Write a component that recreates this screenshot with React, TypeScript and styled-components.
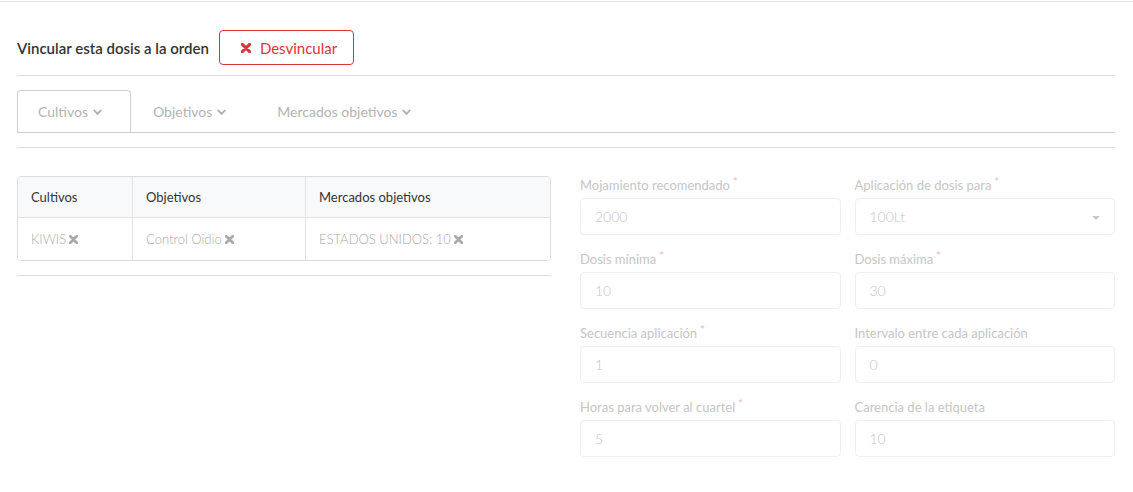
import React from 'react'
import styled, { createGlobalStyle } from 'styled-components'

const GlobalStyle = createGlobalStyle`
    html, body {
        margin: 0;
        padding: 0;
        background: #fff;
        font-family: Lato, "Open Sans", "Liberation Sans", sans-serif;
        color: #333;
    }
    * {
        box-sizing: border-box;
    }
`

const TopRule = styled.div`
    margin-top: 1px;
    height: 1px;
    background: #e3e3e3;
`

const Content = styled.div`
    padding: 28px 18px 0 17px;
`

const HeaderRow = styled.div`
    display: flex;
    align-items: center;
    gap: 10px;
    height: 35px;
`

const Title = styled.span`
    font-size: 15px;
    font-weight: 600;
    color: #333;
`

const DangerButton = styled.button`
    display: flex;
    align-items: center;
    gap: 9px;
    height: 35px;
    width: 135px;
    padding: 0 0 0 21px;
    background: #fff;
    border: 1px solid #d9343a;
    border-radius: 4px;
    color: #d9343a;
    font-family: inherit;
    font-size: 15px;
`

const Rule = styled.hr<{ $top: number; $color?: string }>`
    margin: ${(p) => p.$top}px 0 0;
    border: 0;
    height: 1px;
    background: ${(p) => p.$color || '#dedede'};
`

const TabList = styled.div`
    margin-top: 14px;
    display: flex;
    height: 43px;
    border-bottom: 1px solid #cfcfcf;
`

const TabItem = styled.div<{ $active?: boolean }>`
    display: flex;
    align-items: center;
    gap: 5px;
    padding: 0 28px 0 ${(p) => (p.$active ? 20 : 21)}px;
    height: 42px;
    font-size: 14px;
    color: #b3b3b3;
    border: 1px solid ${(p) => (p.$active ? '#cfcfcf' : 'transparent')};
    border-bottom: 0;
    border-radius: 4px 4px 0 0;
`

const Columns = styled.div`
    margin-top: 28px;
    display: grid;
    grid-template-columns: 534px 535px;
    column-gap: 29px;
`

const LeftCol = styled.div``

const Table = styled.div`
    border: 1px solid #dcdcdc;
    border-radius: 4px;
    overflow: hidden;
    display: grid;
    grid-template-columns: 115px 173px 1fr;
`

const Cell = styled.div<{ $head?: boolean; $last?: boolean }>`
    display: flex;
    align-items: center;
    gap: 3px;
    height: ${(p) => (p.$head ? 41 : 42)}px;
    padding-left: 13px;
    font-size: 13px;
    font-weight: ${(p) => (p.$head ? 400 : 300)};
    color: ${(p) => (p.$head ? '#333' : '#a9a9a9')};
    background: ${(p) => (p.$head ? '#f8f9fb' : '#fff')};
    border-right: ${(p) => (p.$last ? '0' : '1px solid #e2e2e2')};
    border-bottom: ${(p) => (p.$head ? '1px solid #e2e2e2' : '0')};
`

const Form = styled.div`
    display: grid;
    grid-template-columns: 1fr 1fr;
    column-gap: 14px;
    row-gap: 17px;
    padding-top: 2px;
`

const Field = styled.div`
    display: flex;
    flex-direction: column;
`

const Label = styled.label`
    font-size: 13px;
    line-height: 15px;
    height: 20px;
    color: #c6c6c6;
`

const Required = styled.sup`
    color: #f4b6b6;
    margin-left: 3px;
    font-size: 11px;
    vertical-align: 4px;
    line-height: 0;
`

const InputBox = styled.div`
    position: relative;
    display: flex;
    align-items: center;
    height: 37px;
    padding: 0 14px;
    border: 1px solid #efefef;
    border-radius: 4px;
    font-size: 14px;
    font-weight: 300;
    color: #c4c4c4;
`

const Caret = styled.span`
    position: absolute;
    right: 14px;
    top: 17px;
    width: 0;
    height: 0;
    border-left: 4px solid transparent;
    border-right: 4px solid transparent;
    border-top: 4px solid #c9c9c9;
`

// chunky "times" glyph, like the icon font one
function TimesIcon({ size = 10, color = 'currentColor' }: { size?: number; color?: string }) {
    return (
        <svg width={size} height={size} viewBox="0 0 10 10" style={{ display: 'block' }}>
            <path d="M1.4 1.4 L8.6 8.6 M8.6 1.4 L1.4 8.6" stroke={color} strokeWidth="3" strokeLinecap="round" />
        </svg>
    )
}

function ChevronDown() {
    return (
        <svg width="9" height="7" viewBox="0 0 9 7" style={{ display: 'block', marginTop: 1 }}>
            <path d="M1.3 1.6 L4.5 4.8 L7.7 1.6" fill="none" stroke="#b3b3b3" strokeWidth="2" strokeLinecap="round" />
        </svg>
    )
}

const fields = [
    { label: 'Mojamiento recomendado', value: '2000', required: true },
    { label: 'Aplicación de dosis para', value: '100Lt', required: true, select: true },
    { label: 'Dosis mínima', value: '10', required: true },
    { label: 'Dosis máxima', value: '30', required: true },
    { label: 'Secuencia aplicación', value: '1', required: true },
    { label: 'Intervalo entre cada aplicación', value: '0' },
    { label: 'Horas para volver al cuartel', value: '5', required: true },
    { label: 'Carencia de la etiqueta', value: '10' },
]

export default function App() {
    return (
        <>
            <GlobalStyle />
            <TopRule />
            <Content>
                <HeaderRow>
                    <Title>Vincular esta dosis a la orden</Title>
                    <DangerButton>
                        <TimesIcon size={10} />
                        Desvincular
                    </DangerButton>
                </HeaderRow>
                <Rule $top={10} />
                <TabList>
                    <TabItem $active>
                        Cultivos <ChevronDown />
                    </TabItem>
                    <TabItem>
                        Objetivos <ChevronDown />
                    </TabItem>
                    <TabItem>
                        Mercados objetivos <ChevronDown />
                    </TabItem>
                </TabList>
                <Rule $top={14} />
                <Columns>
                    <LeftCol>
                        <Table>
                            <Cell $head>Cultivos</Cell>
                            <Cell $head>Objetivos</Cell>
                            <Cell $head $last>
                                Mercados objetivos
                            </Cell>
                            <Cell>
                                KIWIS <TimesIcon size={9} color="#a9a9a9" />
                            </Cell>
                            <Cell>
                                Control Oidio <TimesIcon size={9} color="#a9a9a9" />
                            </Cell>
                            <Cell $last>
                                ESTADOS UNIDOS: 10 <TimesIcon size={9} color="#a9a9a9" />
                            </Cell>
                        </Table>
                        <Rule $top={14} />
                    </LeftCol>
                    <Form>
                        {fields.map((f) => (
                            <Field key={f.label}>
                                <Label>
                                    {f.label}
                                    {f.required ? <Required>*</Required> : null}
                                </Label>
                                <InputBox>
                                    {f.value}
                                    {f.select ? <Caret /> : null}
                                </InputBox>
                            </Field>
                        ))}
                    </Form>
                </Columns>
            </Content>
        </>
    )
}
